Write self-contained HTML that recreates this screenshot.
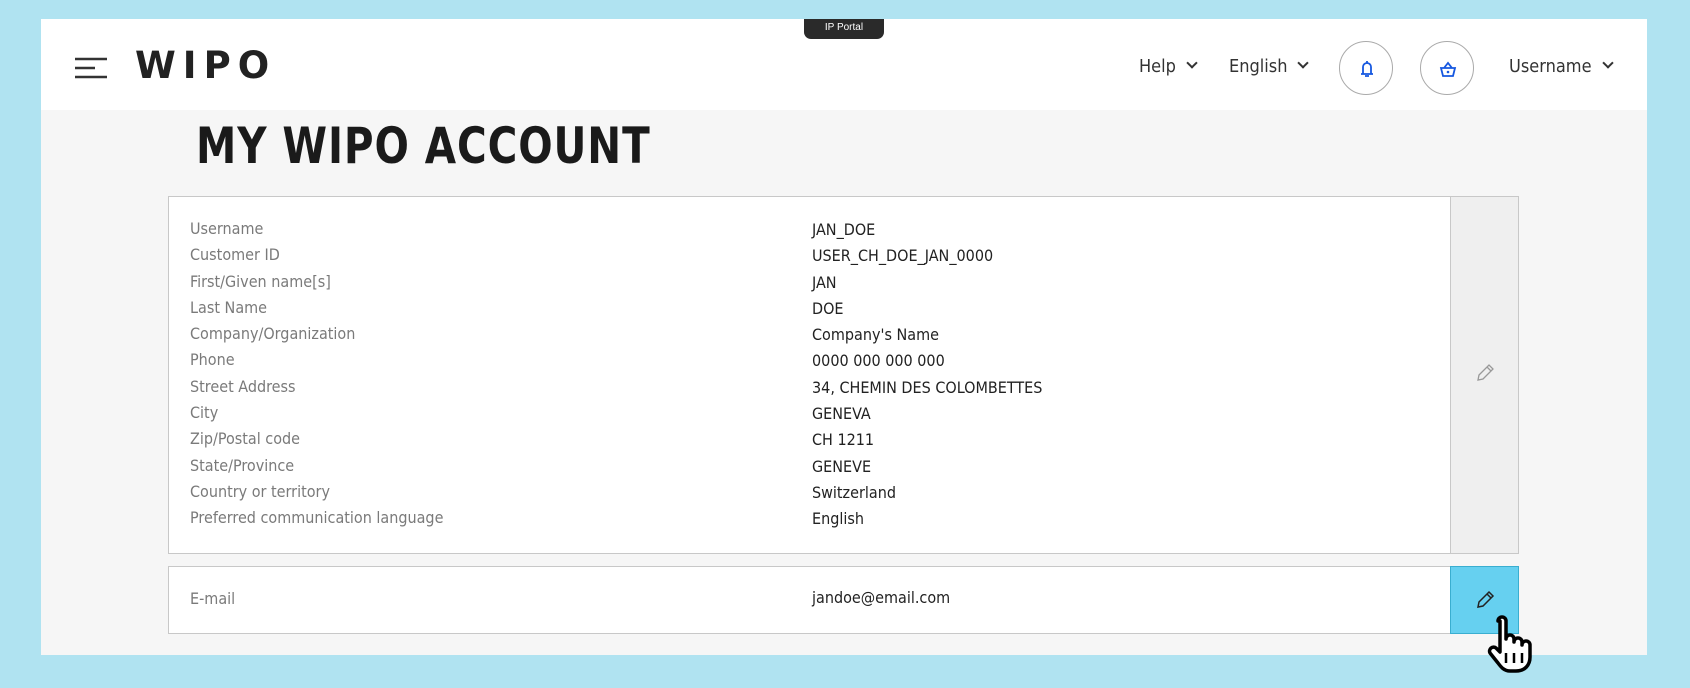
<!DOCTYPE html>
<html><head><meta charset="utf-8"><style>
*{margin:0;padding:0;box-sizing:border-box}
body{width:1690px;height:688px;background:#b0e3f1;position:relative;overflow:hidden;font-family:"Liberation Sans",sans-serif}
.frame{position:absolute;left:41px;top:19px;width:1606px;height:636px;background:#f6f6f6}
.hdr{position:absolute;left:0;top:0;width:1606px;height:91px;background:#fff}
.a{position:absolute}
.tab{left:763px;top:0;width:80px;height:20px;background:#2a2a2a;color:#fff;font-size:10px;text-align:center;line-height:18px;border-radius:0 0 7px 7px}
.logo{left:94px;top:25px;font-size:37px;font-weight:bold;letter-spacing:7px;color:#222;font-family:"DejaVu Sans",sans-serif}
.nav{top:37px;font-size:18px;color:#333;font-family:"DejaVu Sans Condensed","DejaVu Sans",sans-serif}
.chev{display:inline-block;width:8px;height:8px;border-right:2px solid #333;border-bottom:2px solid #333;transform:rotate(45deg);margin-left:12px;position:relative;top:-5px}
.circ{width:54px;height:54px;border:1px solid #aaa;border-radius:50%;top:22px}
.title{left:155px;top:98px;font-size:50px;font-weight:bold;color:#1a1a1a;font-family:"DejaVu Sans Condensed","DejaVu Sans",sans-serif;transform:scaleX(.9);transform-origin:left;letter-spacing:1px}
.box{position:absolute;background:#fff;border:1px solid #c8c8c8}
.rows{position:absolute;left:21px;top:19px;font-size:16px;line-height:26.3px;color:#7a7a7a;font-family:"DejaVu Sans Condensed","DejaVu Sans",sans-serif}
.vals{position:absolute;left:643px;top:20px;font-size:16px;line-height:26.3px;color:#222;font-family:"DejaVu Sans Condensed","DejaVu Sans",sans-serif}
</style></head><body>
<div class="frame">
 <div class="hdr">
  <svg class="a" style="left:34px;top:38px" width="32" height="22"><path d="M0 2h32M0 11h20M0 20h32" stroke="#333" stroke-width="2.5"/></svg>
  <div class="a logo">WIPO</div>
  <div class="a tab">IP Portal</div>
  <div class="a nav" style="left:1098px">Help<span class="chev"></span></div>
  <div class="a nav" style="left:1188px">English<span class="chev"></span></div>
  <div class="a circ" style="left:1298px"><svg width="54" height="54"><path d="M21 32h12M23 32v-7a4 4 0 0 1 8 0v7M27 21v-2M25 34h4" stroke="#1557e0" stroke-width="1.8" fill="none"/></svg></div>
  <div class="a circ" style="left:1379px"><svg width="54" height="54"><path d="M20 26h14l-2 8h-10zM23 26l4-5 4 5" stroke="#1557e0" stroke-width="1.8" fill="none"/><circle cx="27" cy="30" r="1.3" fill="#1557e0"/></svg></div>
  <div class="a nav" style="left:1468px">Username<span class="chev"></span></div>
 </div>
 <div class="a title">MY WIPO ACCOUNT</div>
 <div class="box" style="left:127px;top:177px;width:1351px;height:358px">
  <div class="rows">Username<br>Customer ID<br>First/Given name[s]<br>Last Name<br>Company/Organization<br>Phone<br>Street Address<br>City<br>Zip/Postal code<br>State/Province<br>Country or territory<br>Preferred communication language</div>
  <div class="vals">JAN_DOE<br>USER_CH_DOE_JAN_0000<br>JAN<br>DOE<br>Company's Name<br>0000 000 000 000<br>34, CHEMIN DES COLOMBETTES<br>GENEVA<br>CH 1211<br>GENEVE<br>Switzerland<br>English</div>
  <div class="a" style="right:0;top:0;width:68px;height:356px;background:#efefef;border-left:1px solid #c8c8c8">
   <svg class="a" style="left:23px;top:165px" width="22" height="22"><path d="M4 18l1-5L15 3l4 4L9 17zM13 5l4 4" stroke="#999" stroke-width="1.3" fill="none"/></svg>
  </div>
 </div>
 <div class="box" style="left:127px;top:547px;width:1351px;height:68px">
  <div class="a" style="left:21px;top:22px;font-size:16px;color:#7a7a7a;font-family:'DejaVu Sans Condensed',sans-serif">E-mail</div>
  <div class="a" style="left:643px;top:21px;font-size:16px;color:#222;font-family:'DejaVu Sans Condensed',sans-serif">jandoe@email.com</div>
  <div class="a" style="right:-1px;top:-1px;width:69px;height:68px;background:#66d0f0;border:1px solid #3aaed0">
   <svg class="a" style="left:23px;top:22px" width="22" height="22"><path d="M4 18l1-5L15 3l4 4L9 17zM13 5l4 4" stroke="#222" stroke-width="1.5" fill="none"/></svg>
  </div>
 </div>
</div>
<svg class="a" style="left:1484px;top:615px" width="56" height="64"><path d="M14 6a4 4 0 0 1 8 0v18a4 4 0 0 1 8 0v3a4 4 0 0 1 8 0v3a4 4 0 0 1 8 0v12c0 8-5 14-14 14h-6c-6 0-9-4-12-8l-8-10a4 4 0 0 1 6-5l4 4V6z" fill="#fff" stroke="#000" stroke-width="3.5" stroke-linejoin="round"/><path d="M22 38v10M30 38v10M38 38v10" stroke="#000" stroke-width="2.5"/></svg>
</body></html>
